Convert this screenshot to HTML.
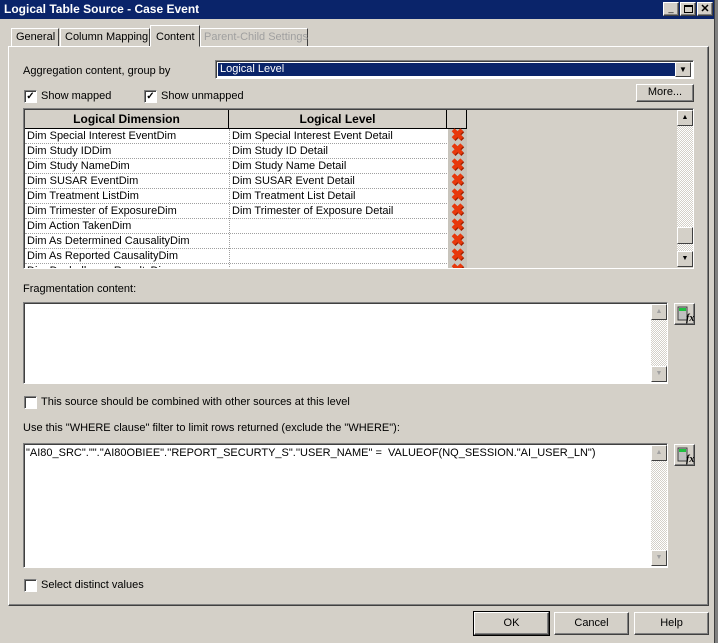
<!DOCTYPE html>
<html><head><style>
*{box-sizing:border-box;margin:0;padding:0}
body{width:718px;height:643px;background:#d4d0c8;font-family:"Liberation Sans",sans-serif;font-size:11px;color:#000;position:relative;overflow:hidden}
.a{position:absolute;white-space:nowrap}
.btn{position:absolute;background:#d4d0c8;border:1px solid;border-color:#fff #404040 #404040 #fff;box-shadow:inset -1px -1px 0 #808080;text-align:center}
.sunk{position:absolute;border:1px solid;border-color:#808080 #fff #fff #808080;box-shadow:inset 1px 1px 0 #404040}
.cb{position:absolute;width:13px;height:13px;background:#fff;border:1px solid;border-color:#808080 #fff #fff #808080;box-shadow:inset 1px 1px 0 #404040;font-size:10px;line-height:11px;text-align:center;font-weight:bold}
.row{position:absolute;left:0;height:15px;width:442px;border-bottom:1px dotted #a0a0a0;white-space:nowrap}
.row span{position:absolute;top:1px}
.x{position:absolute;left:423px;width:19px;height:15px;background:#c8c4bc;color:#e8380c;font-weight:bold;font-size:16px;line-height:14px;text-align:center;text-shadow:1px 1px 0 #a02000}
.sb{position:absolute;width:16px;background:repeating-conic-gradient(#fff 0 25%,#d4d0c8 0 50%) 0 0/2px 2px}
.arr{position:absolute;left:0;width:16px;height:16px;background:#d4d0c8;border:1px solid;border-color:#fff #404040 #404040 #fff;font-size:7px;line-height:14px;text-align:center}
.calc{position:absolute;width:21px;height:22px}
.tab{position:absolute;white-space:nowrap;border:1px solid;border-color:#fff #404040 transparent #fff}
</style></head><body>
<div class="a" style="left:0;top:0;width:714px;height:19px;background:#0a246a;color:#fff;font-weight:bold;font-size:12px;line-height:18px;padding-left:4px">Logical Table Source - Case Event</div>
<div class="btn" style="left:663px;top:2px;width:16px;height:14px;font-size:9px;line-height:10px">_</div>
<div class="btn" style="left:680px;top:2px;width:16px;height:14px"><div class="a" style="left:3px;top:2px;width:9px;height:8px;border:1px solid #000;border-top-width:2px"></div></div>
<div class="btn" style="left:697px;top:2px;width:16px;height:14px;font-weight:bold;font-size:11px;line-height:12px">✕</div>
<div class="a" style="left:714px;top:0;width:4px;height:643px;background:#808080;border-left:1px solid #404040"></div>
<!-- tabs -->
<div class="tab" style="left:11px;top:28px;width:48px;height:19px;padding:2px 0 0 4px">General</div>
<div class="tab" style="left:60px;top:28px;width:90px;height:19px;padding:2px 0 0 4px">Column Mapping</div>
<div class="tab" style="left:150px;top:25px;width:50px;height:22px;padding:5px 0 0 5px;background:#d4d0c8;z-index:2">Content</div>
<div class="tab" style="left:200px;top:28px;width:108px;height:19px;padding:2px 0 0 3px;color:#a0a0a0">Parent-Child Settings</div>
<div class="a" style="left:8px;top:46px;width:701px;height:560px;border:1px solid;border-color:#fff #404040 #404040 #fff;box-shadow:inset -1px -1px 0 #808080"></div>
<div class="a" style="left:23px;top:65px">Aggregation content, group by</div>
<div class="sunk" style="left:215px;top:60px;width:479px;height:19px;background:#fff"><div class="a" style="left:2px;top:2px;width:457px;height:13px;background:#0a246a;color:#fff;padding-left:2px;line-height:13px">Logical Level</div><div class="arr" style="left:459px;top:1px;height:15px;font-size:8px">▼</div></div>
<div class="cb" style="left:24px;top:90px">✓</div><div class="a" style="left:41px;top:90px">Show mapped</div>
<div class="cb" style="left:144px;top:90px">✓</div><div class="a" style="left:161px;top:90px">Show unmapped</div>
<div class="btn" style="left:636px;top:84px;width:58px;height:18px;line-height:15px">More...</div>
<!-- table -->
<div class="sunk" style="left:23px;top:108px;width:671px;height:161px;background:#d4d0c8;overflow:hidden">
<div class="a" style="left:1px;top:1px;width:442px;height:19px;background:#d4d0c8;border-bottom:1px solid #000;font-weight:bold;font-size:12px;line-height:18px">
<div class="a" style="left:0;width:204px;text-align:center;border-right:1px solid #000;height:18px">Logical Dimension</div>
<div class="a" style="left:204px;width:218px;text-align:center;border-right:1px solid #000;height:18px">Logical Level</div>
<div class="a" style="left:422px;width:20px;border-right:1px solid #000;height:18px"></div>
</div>
<div class="a" style="left:1px;top:20px;width:423px;height:140px;background:#fff"></div>
<div class="a" style="left:205px;top:20px;height:140px;border-left:1px dotted #a0a0a0"></div>
<div class="a" style="left:1px;top:20px">
<div class="row" style="top:0"><span style="left:2px">Dim Special Interest EventDim</span><span style="left:207px">Dim Special Interest Event Detail</span><div class="x">✖</div></div>
<div class="row" style="top:15px"><span style="left:2px">Dim Study IDDim</span><span style="left:207px">Dim Study ID Detail</span><div class="x">✖</div></div>
<div class="row" style="top:30px"><span style="left:2px">Dim Study NameDim</span><span style="left:207px">Dim Study Name Detail</span><div class="x">✖</div></div>
<div class="row" style="top:45px"><span style="left:2px">Dim SUSAR EventDim</span><span style="left:207px">Dim SUSAR Event Detail</span><div class="x">✖</div></div>
<div class="row" style="top:60px"><span style="left:2px">Dim Treatment ListDim</span><span style="left:207px">Dim Treatment List Detail</span><div class="x">✖</div></div>
<div class="row" style="top:75px"><span style="left:2px">Dim Trimester of ExposureDim</span><span style="left:207px">Dim Trimester of Exposure Detail</span><div class="x">✖</div></div>
<div class="row" style="top:90px"><span style="left:2px">Dim Action TakenDim</span><div class="x">✖</div></div>
<div class="row" style="top:105px"><span style="left:2px">Dim As Determined CausalityDim</span><div class="x">✖</div></div>
<div class="row" style="top:120px"><span style="left:2px">Dim As Reported CausalityDim</span><div class="x">✖</div></div>
<div class="row" style="top:135px"><span style="left:2px">Dim Dechallenge ResultsDim</span><div class="x">✖</div></div>
</div>
<div class="sb" style="left:653px;top:1px;height:157px"><div class="arr" style="top:0">▲</div><div class="arr" style="top:117px;height:17px"></div><div class="arr" style="top:141px">▼</div></div>
</div>
<div class="a" style="left:23px;top:283px">Fragmentation content:</div>
<div class="sunk" style="left:23px;top:302px;width:645px;height:82px;background:#fff"><div class="sb" style="left:627px;top:1px;height:78px"><div class="arr" style="top:0;color:#a0a0a0">▲</div><div class="arr" style="top:62px;color:#a0a0a0">▼</div></div></div>
<div class="btn calc" style="left:674px;top:303px"><svg width="19" height="20" class="a" style="left:0;top:0"><rect x="3" y="3" width="9" height="13" fill="#c0c0c0" stroke="#404040"/><rect x="4" y="4" width="7" height="3" fill="#20c040"/><text x="11" y="17" font-size="10" font-style="italic" font-weight="bold" font-family="Liberation Serif">fx</text></svg></div>
<div class="cb" style="left:24px;top:396px"></div><div class="a" style="left:41px;top:396px">This source should be combined with other sources at this level</div>
<div class="a" style="left:23px;top:422px">Use this "WHERE clause" filter to limit rows returned (exclude the "WHERE"):</div>
<div class="sunk" style="left:23px;top:443px;width:645px;height:125px;background:#fff"><div class="a" style="left:2px;top:3px;white-space:nowrap">"AI80_SRC"."".''AI80OBIEE".''REPORT_SECURTY_S".''USER_NAME" =&nbsp; VALUEOF(NQ_SESSION."AI_USER_LN")</div><div class="sb" style="left:627px;top:1px;height:121px"><div class="arr" style="top:0;color:#a0a0a0">▲</div><div class="arr" style="top:105px;color:#a0a0a0">▼</div></div></div>
<div class="btn calc" style="left:674px;top:444px"><svg width="19" height="20" class="a" style="left:0;top:0"><rect x="3" y="3" width="9" height="13" fill="#c0c0c0" stroke="#404040"/><rect x="4" y="4" width="7" height="3" fill="#20c040"/><text x="11" y="17" font-size="10" font-style="italic" font-weight="bold" font-family="Liberation Serif">fx</text></svg></div>
<div class="cb" style="left:24px;top:579px"></div><div class="a" style="left:41px;top:579px">Select distinct values</div>
<div class="btn" style="left:474px;top:612px;width:75px;height:23px;line-height:20px;outline:1px solid #000">OK</div>
<div class="btn" style="left:554px;top:612px;width:75px;height:23px;line-height:20px">Cancel</div>
<div class="btn" style="left:634px;top:612px;width:75px;height:23px;line-height:20px">Help</div>
</body></html>
